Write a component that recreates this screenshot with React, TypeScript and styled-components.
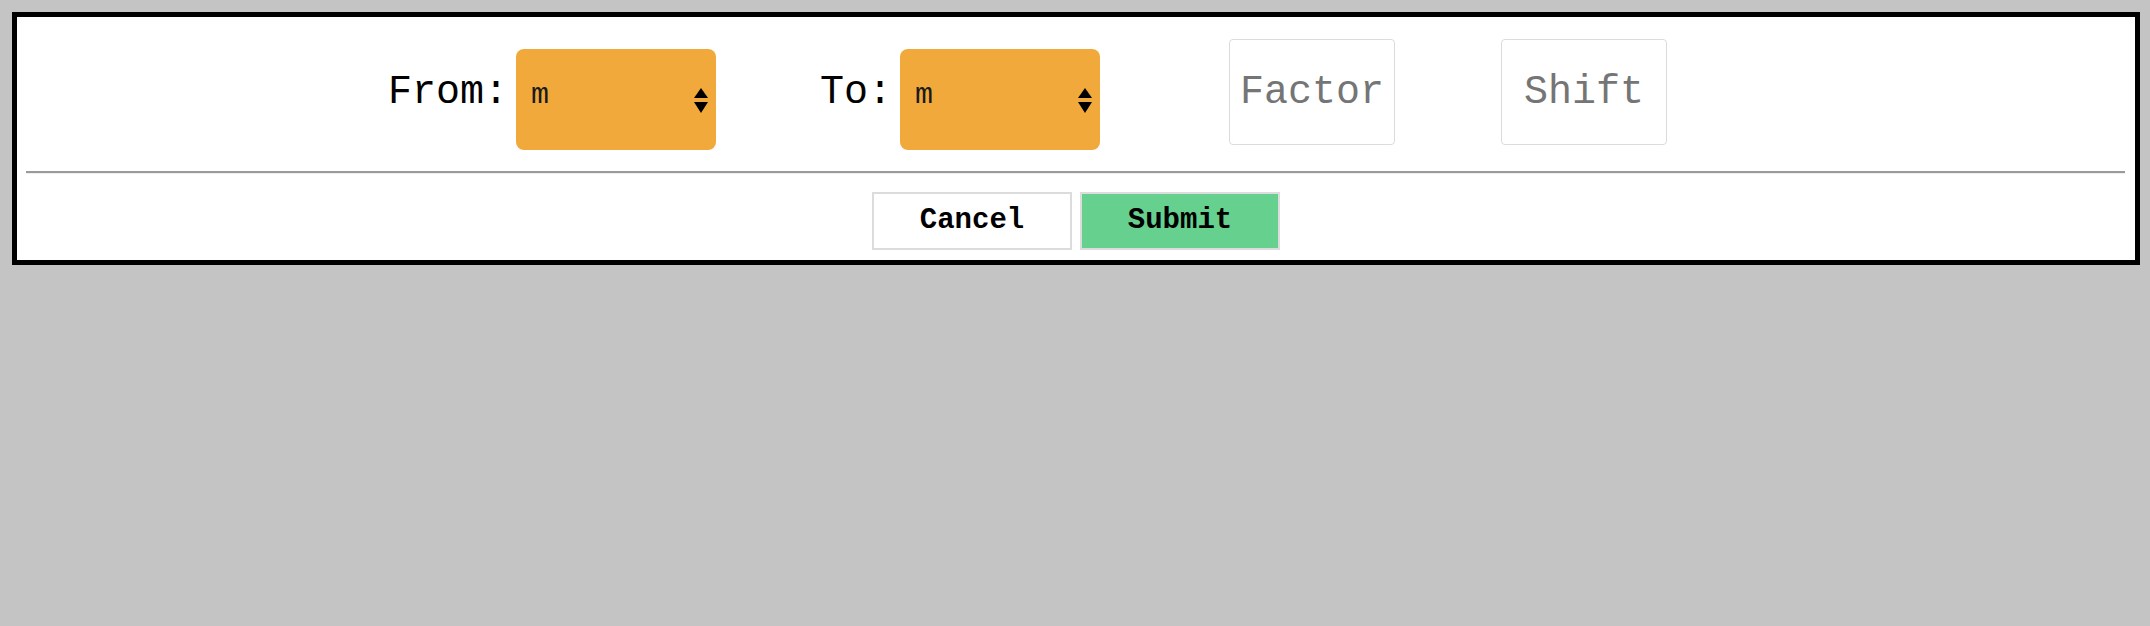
import React from "react";
import styled, { createGlobalStyle } from "styled-components";

const GlobalStyle = createGlobalStyle`
  html, body {
    margin: 0;
    padding: 0;
    background: #c4c4c4;
    font-family: "Liberation Mono", "Courier New", monospace;
  }
`;

const Panel = styled.div`
  box-sizing: border-box;
  width: 2128px;
  margin: 12px;
  border: 5px solid #000;
  background: #fff;
`;

const FieldRow = styled.div`
  display: flex;
  justify-content: center;
  align-items: baseline;
  padding: 22px 97px 0 0;
`;

const Field = styled.div<{ $ml: number }>`
  display: flex;
  align-items: baseline;
  gap: 8px;
  margin-left: ${(p) => p.$ml}px;
`;

const Label = styled.label`
  font-family: "Liberation Mono", "Courier New", monospace;
  font-size: 40px;
  color: #000;
`;

const SelectWrap = styled.div`
  position: relative;
  display: inline-flex;
  align-items: baseline;
`;

const Select = styled.select`
  appearance: none;
  -webkit-appearance: none;
  box-sizing: border-box;
  width: 200px;
  height: 101px;
  padding: 0 30px 9px 15px;
  border: none;
  border-radius: 8px;
  background: #f2a93b;
  color: #1a1a1a;
  font-family: "Liberation Mono", "Courier New", monospace;
  font-size: 30px;
  outline: none;
`;

const Arrows = styled.svg`
  position: absolute;
  right: 8px;
  top: 39px;
  width: 14px;
  height: 25px;
  pointer-events: none;
`;

const NumberInput = styled.input`
  box-sizing: border-box;
  width: 166px;
  height: 106px;
  border: 1px solid #dcdcdc;
  border-radius: 4px;
  background: #fff;
  text-align: center;
  font-family: "Liberation Mono", "Courier New", monospace;
  font-size: 40px;
  color: #000;
  outline: none;
  &::placeholder {
    color: #757575;
  }
`;

const Divider = styled.hr`
  height: 0;
  margin: 21px 10px 0 9px;
  border: none;
  border-top: 2px solid #9a9a9a;
  border-bottom: 1px solid #eeeeee;
`;

const ButtonRow = styled.div`
  display: flex;
  justify-content: center;
  gap: 8px;
  padding: 18px 0 10px;
`;

const ActionButton = styled.button<{ $primary?: boolean }>`
  box-sizing: border-box;
  width: 200px;
  height: 58px;
  border: 2px solid #dcdcdc;
  background: ${(p) => (p.$primary ? "#66d18f" : "#fff")};
  color: #000;
  font-family: "Liberation Mono", "Courier New", monospace;
  font-size: 29px;
  font-weight: bold;
  cursor: pointer;
`;

function UnitSelect({ id }: { id: string }) {
  return (
    <SelectWrap>
      <Select id={id} defaultValue="m">
        <option value="m">m</option>
        <option value="cm">cm</option>
        <option value="km">km</option>
      </Select>
      <Arrows viewBox="0 0 14 25">
        <polygon points="7,0 14,10 0,10" fill="#000" />
        <polygon points="0,14 14,14 7,25" fill="#000" />
      </Arrows>
    </SelectWrap>
  );
}

export default function App() {
  return (
    <>
      <GlobalStyle />
      <Panel>
        <FieldRow>
          <Field $ml={0}>
            <Label htmlFor="from">From:</Label>
            <UnitSelect id="from" />
          </Field>
          <Field $ml={104}>
            <Label htmlFor="to">To:</Label>
            <UnitSelect id="to" />
          </Field>
          <Field $ml={129}>
            <NumberInput placeholder="Factor" />
          </Field>
          <Field $ml={106}>
            <NumberInput placeholder="Shift" />
          </Field>
        </FieldRow>
        <Divider />
        <ButtonRow>
          <ActionButton>Cancel</ActionButton>
          <ActionButton $primary>Submit</ActionButton>
        </ButtonRow>
      </Panel>
    </>
  );
}
